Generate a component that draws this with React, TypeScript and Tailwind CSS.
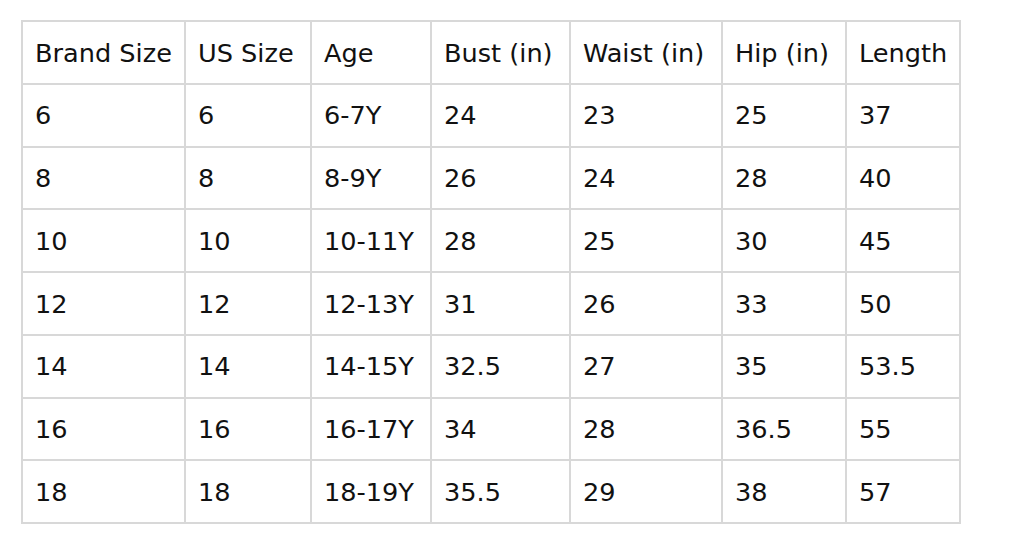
import React from "react";

const header = ["Brand Size", "US Size", "Age", "Bust (in)", "Waist (in)", "Hip (in)", "Length"];
const rows = [
  ["6", "6", "6-7Y", "24", "23", "25", "37"],
  ["8", "8", "8-9Y", "26", "24", "28", "40"],
  ["10", "10", "10-11Y", "28", "25", "30", "45"],
  ["12", "12", "12-13Y", "31", "26", "33", "50"],
  ["14", "14", "14-15Y", "32.5", "27", "35", "53.5"],
  ["16", "16", "16-17Y", "34", "28", "36.5", "55"],
  ["18", "18", "18-19Y", "35.5", "29", "38", "57"],
];
const widths = [163, 126, 120, 139, 152, 124, 114];

export default function App() {
  return (
    <div className="w-[1024px] h-[550px] bg-white overflow-hidden pt-[20px] pl-[21px]" style={{ fontFamily: '"DejaVu Sans", Verdana, sans-serif' }}>
      <table className="table-fixed border-collapse text-[25.6px] text-[#111]">
        <colgroup>
          {widths.map((w, i) => (
            <col key={i} style={{ width: w }} />
          ))}
        </colgroup>
        <tbody>
          {[header, ...rows].map((r, ri) => (
            <tr key={ri} className="h-[62.75px]">
              {r.map((c, ci) => (
                <td key={ci} className="border-2 border-[#d8d8d8] pl-[12px] pr-0 pt-[2px] pb-0 align-middle whitespace-nowrap leading-none">
                  {c}
                </td>
              ))}
            </tr>
          ))}
        </tbody>
      </table>
    </div>
  );
}
